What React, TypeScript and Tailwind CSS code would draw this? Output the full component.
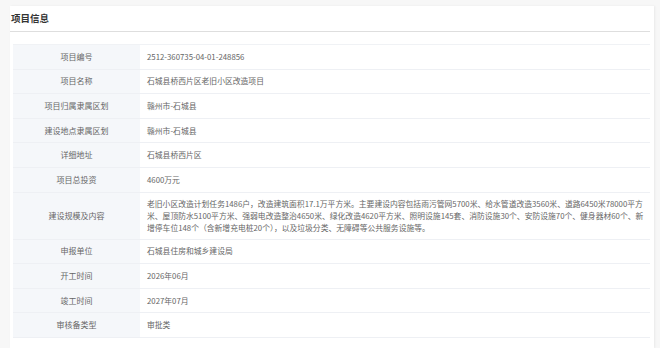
import React from "react";

const rows: { label: string; value: string; tall?: boolean }[] = [
  { label: "项目编号", value: "2512-360735-04-01-248856" },
  { label: "项目名称", value: "石城县桥西片区老旧小区改造项目" },
  { label: "项目归属隶属区划", value: "赣州市-石城县" },
  { label: "建设地点隶属区划", value: "赣州市-石城县" },
  { label: "详细地址", value: "石城县桥西片区" },
  { label: "项目总投资", value: "4600万元" },
  {
    label: "建设规模及内容",
    value:
      "老旧小区改造计划任务1486户，改造建筑面积17.1万平方米。主要建设内容包括雨污管网5700米、给水管道改造3560米、道路6450米78000平方米、屋顶防水5100平方米、强弱电改造整治4650米、绿化改造4620平方米、照明设施145套、消防设施30个、安防设施70个、健身器材60个、新增停车位148个（含新增充电桩20个），以及垃圾分类、无障碍等公共服务设施等。",
    tall: true,
  },
  { label: "申报单位", value: "石城县住房和城乡建设局" },
  { label: "开工时间", value: "2026年06月" },
  { label: "竣工时间", value: "2027年07月" },
  { label: "审核备类型", value: "审批类" },
];

export default function App() {
  return (
    <div
      className="w-[660px] h-[348px] bg-[#f7f7f7] overflow-hidden pt-[6px] pl-[10px] pr-[6px]"
      style={{ fontFamily: '"Noto Sans CJK SC", "Liberation Sans", sans-serif' }}
    >
      <div className="bg-white h-[342px] shadow-[1px_0_2px_rgba(0,0,0,0.06)]">
        <div className="h-[26px] flex items-center border-b border-[#dedede] mr-[4px]">
          <span className="text-[9.5px] font-bold text-[#333] leading-none pl-[1px]">项目信息</span>
        </div>
        <div className="pt-[12px] pl-[3px] pr-[4px]">
          <div className="border-t border-[#f0f2f5]">
            {rows.map((r) => (
              <div
                key={r.label}
                className={`flex border-b border-[#eef0f4] ${r.tall ? "h-[47px]" : "h-[24.6px]"}`}
              >
                <div className="w-[127px] shrink-0 bg-[#f5f7fa] flex items-center justify-center text-[8px] text-[#666]">
                  {r.label}
                </div>
                <div
                  className={`flex-1 flex items-center pl-[7px] pr-[6px] text-[7.8px] text-[#666] ${
                    r.tall ? "leading-[12px]" : "leading-none"
                  }`}
                >
                  {r.value}
                </div>
              </div>
            ))}
          </div>
        </div>
      </div>
    </div>
  );
}
